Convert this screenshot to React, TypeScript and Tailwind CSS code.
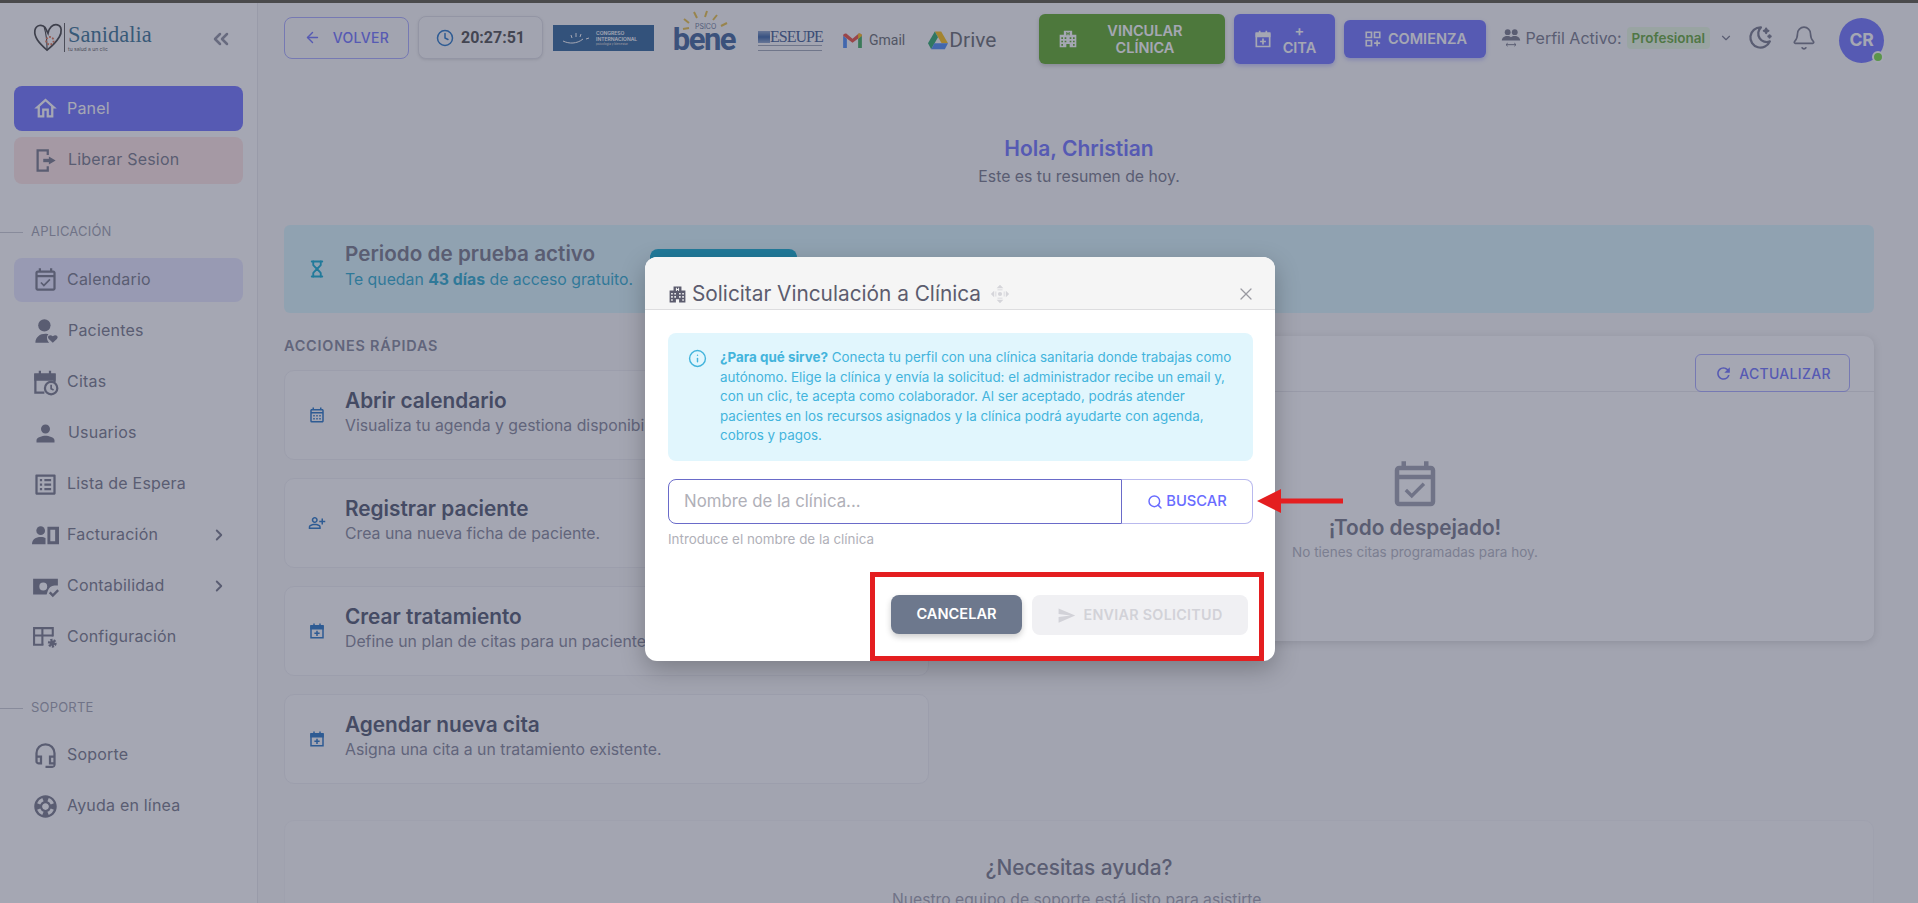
import { ArrowLeft, Bell, ChevronDown, ChevronRight, ChevronsLeft, Clock, Hourglass, Info, Search, X } from "lucide-react";
import {
  MdOutlineCalendarMonth,
  MdOutlineEventAvailable,
  MdOutlineHeadsetMic,
  MdOutlineHome,
  MdOutlineListAlt,
  MdOutlinePersonAddAlt,
  MdOutlineSupport,
  MdPerson,
  MdRefresh,
  MdSend,
} from "react-icons/md";
import { TbMoonStars } from "react-icons/tb";

type IconProps = { className?: string };

function HospitalIcon({ className }: IconProps) {
  return (
    <svg viewBox="0 0 24 24" className={className} fill="currentColor">
      <path
        fillRule="evenodd"
        d="M7 2h10v5h5v15h-8v-4h-4v4H2V7h5zm3 1.500v4h1.200V6.200h1.600v1.300H14v-4h-1.200v1.500h-1.600V3.500zM4 10v2h2v-2zm4 0v2h2v-2zm6 0v2h2v-2zm4 0v2h2v-2zM4 14v2h2v-2zm4 0v2h2v-2zm6 0v2h2v-2zm4 0v2h2v-2zM4 18v2h2v-2zm14 0v2h2v-2z"
      />
    </svg>
  );
}

function LogoutIcon({ className }: IconProps) {
  return (
    <svg viewBox="0 0 24 24" className={className} fill="none" stroke="currentColor" strokeWidth="2">
      <path d="M14 7V3H5v18h9v-4" />
      <path d="M9 12h6V8.500l6 3.500-6 3.500V12" fill="currentColor" stroke="none" />
      <path d="M10 10.500h6v3h-6z" fill="currentColor" stroke="none" />
    </svg>
  );
}

function PatientIcon({ className }: IconProps) {
  return (
    <svg viewBox="0 0 24 24" className={className} fill="currentColor">
      <circle cx="11" cy="6.500" r="5.500" />
      <path d="M3 22c0-5 4-8 9-8 1.300 0 2 .2 2.600.4-1.500 1.400-2 4.600.6 7.600z" />
      <path d="M18.500 22l-3.600-3.400c-2-2 .8-4.800 3.600-2.400 2.800-2.400 5.600.4 3.600 2.400z" />
    </svg>
  );
}

function CalendarClockIcon({ className }: IconProps) {
  return (
    <svg viewBox="0 0 24 24" className={className} fill="none" stroke="currentColor" strokeWidth="2">
      <path d="M11 21H3V5h17v7" />
      <path d="M7 1.500v4M16 1.500v4" />
      <path d="M3 5h17v4.500H3z" fill="currentColor" />
      <circle cx="17" cy="17" r="5.500" />
      <path d="M17 14v3.500l2.200 1.200" strokeWidth="1.500" />
    </svg>
  );
}

function BillingIcon({ className }: IconProps) {
  return (
    <svg viewBox="0 0 28 24" className={className} fill="currentColor">
      <circle cx="9" cy="7" r="4.500" />
      <path d="M0 21c0-5 4-7.500 9-7.500 2.500 0 4 .5 5 1.200V21z" />
      <path fillRule="evenodd" d="M16 3h12v18H16zm3 3v12h5V6z" />
    </svg>
  );
}

function AccountingIcon({ className }: IconProps) {
  return (
    <svg viewBox="0 0 24 24" className={className} fill="currentColor">
      <path fillRule="evenodd" d="M1 5h22v6h-3c-3 0-5 2-6 5l-1 3H1zm9 3.500a3.500 3.500 0 1 0 0 7 3.500 3.500 0 0 0 0-7z" />
      <path d="M15 18l1.500-1.500 2 2 4-4 1.500 1.500-5.500 5.500z" />
    </svg>
  );
}

function SettingsIcon({ className }: IconProps) {
  return (
    <svg viewBox="0 0 26 24" className={className} fill="none" stroke="currentColor" strokeWidth="2">
      <path d="M11 19H2V3h18v8" />
      <path d="M2 10h18M10 3v16" />
      <circle cx="19.500" cy="17.500" r="3" strokeWidth="2.500" strokeDasharray="2 1" />
      <circle cx="19.500" cy="17.500" r="2.500" fill="currentColor" stroke="none" />
    </svg>
  );
}

function CalendarPlusIcon({ className }: IconProps) {
  return (
    <svg viewBox="0 0 24 24" className={className} fill="none" stroke="currentColor" strokeWidth="2">
      <path d="M4 5h16v16H4z" />
      <path d="M8 2v4M16 2v4" />
      <path d="M4 6h16v3H4z" fill="currentColor" />
      <path d="M12 11.500v7M8.500 15h7" />
    </svg>
  );
}

function GridPlusIcon({ className }: IconProps) {
  return (
    <svg viewBox="0 0 24 24" className={className} fill="none" stroke="currentColor" strokeWidth="2.200">
      <path d="M3 3h7v7H3zM14 3h7v7h-7zM3 14h7v7H3z" />
      <path d="M17.500 13.500v8M13.500 17.500h8" />
    </svg>
  );
}

function SwitchAccountIcon({ className }: IconProps) {
  return (
    <svg viewBox="0 0 24 24" className={className} fill="currentColor">
      <circle cx="8" cy="5" r="3.500" />
      <circle cx="16.500" cy="5" r="3.500" />
      <path d="M1 15c0-3.500 3-5.500 6.500-5.500 2 0 3.500.5 4.500 1.500 1-1 2.500-1.500 4.500-1.500 3.500 0 6.500 2 6.500 5.500z" />
      <path d="M6 20h12M6 20l2-1.800M6 20l2 1.800M18 20l-2-1.800M18 20l-2 1.800" fill="none" stroke="currentColor" strokeWidth="1.200" />
    </svg>
  );
}

function MoveIcon({ className }: IconProps) {
  return (
    <svg viewBox="0 0 24 24" className={className} fill="currentColor">
      <path d="M12 1l4 4H8zM12 23l-4-4h8zM1 12l4-4v8zM23 12l-4 4V8z" />
      <circle cx="12" cy="12" r="2.500" />
      <path d="M9 7h6M9 17h6M7 9v6M17 9v6" stroke="currentColor" strokeWidth="1" fill="none" />
    </svg>
  );
}

function HeartLogo() {
  return (
    <svg viewBox="0 0 32 32" className="h-[32px] w-[30px]">
      <path d="M15 30C6 22 1 16 2 9c1-6 8-7 11-3l3 6c1-6 5-10 10-9 5 1 5 8 2 13-3 5-8 10-13 14z" fill="none" stroke="#3a3a3a" strokeWidth="1.800" />
      <path d="M12 6c2 6 3 14 3 24" fill="none" stroke="#3a3a3a" strokeWidth="1.200" />
      <circle cx="18" cy="20" r="4" fill="none" stroke="#e0704a" strokeWidth="2" strokeDasharray="2 1.500" />
    </svg>
  );
}

function SanidaliaLogo() {
  return (
    <div className="flex items-center">
      <HeartLogo />
      <div className="ml-[1px] border-l border-[#555555] pl-[3px]">
        <div className="[font-family:'Liberation_Serif',serif] text-[22.500px] leading-[23px] text-[#2f6b8f]">Sanidalia</div>
        <div className="text-[5px] leading-[6px] text-[#555555]">tu salud a un clic</div>
      </div>
    </div>
  );
}

function PartnerLogos() {
  return (
    <div className="ml-[10px] flex items-center">
      <div className="flex h-[26px] w-[101px] items-center gap-[5px] bg-[#255c94] pl-[8px] text-white">
        <svg viewBox="0 0 30 14" className="h-[14px] w-[30px]" fill="none" stroke="#ffffff" strokeWidth="1">
          <path d="M2 10c6 3 14 3 20-2M10 4l1 3M15 2v4M20 3l-1 3M25 8l3-1" />
        </svg>
        <div className="text-[5px] font-semibold leading-[6px]">
          <div>CONGRESO</div>
          <div>INTERNACIONAL</div>
          <div className="text-[3px] leading-[4px] text-[#cccccc]">psicología y bienestar</div>
        </div>
      </div>
      <div className="relative mb-[12px] ml-[21px] flex h-[39px] w-[60px] flex-col items-end justify-end pb-[2px]">
        <svg viewBox="0 0 60 22" className="absolute left-0 top-[-3px] h-[22px] w-[60px]" fill="none" stroke="#e7bd3c" strokeWidth="2">
          <path d="M14 14l-5-4M22 9l-3-6M30 8l2-6M38 11l4-5M46 17l6-3M8 20l6-1" />
        </svg>
        <div className="absolute left-[20px] top-[11px] text-[7px] leading-[8px] text-[#5a6d90]">PSICO</div>
        <div className="[font-family:Roboto,sans-serif] text-[31px] font-bold leading-[18px] tracking-[-1.500px] text-[#345a94]">bene</div>
      </div>
      <div className="ml-[23px] mt-[5px] flex h-[22px] w-[66px] flex-col items-start">
        <div className="flex items-center">
          <div className="h-[12px] w-[12px] bg-[linear-gradient(#8aa2c8,#2c5aa0,#8aa2c8)]" />
          <div className="[font-family:'Liberation_Serif',serif] text-[16px] leading-[15px] tracking-[-1px] text-[#33518a]">ESEUPE</div>
        </div>
        <div className="mt-[1px] h-[6px] w-[64px] border-y border-[#9aa2b0]" />
      </div>
      <div className="ml-[19px] mt-[5px] flex items-center gap-[7px]">
        <svg viewBox="0 0 20 16" className="h-[15px] w-[19px]">
          <path d="M0 16V3l4 3v10z" fill="#4285f4" />
          <path d="M16 16V6l4-3v13z" fill="#34a853" />
          <path d="M0 3c0-2 2.500-3 4-2l6 5 6-5c1.500-1 4 0 4 2l-10 7.500z" fill="#ea4335" />
          <path d="M16 1c1.500-1 4 0 4 2l-4 3z" fill="#fbbc04" />
        </svg>
        <span className="[font-family:Roboto,sans-serif] text-[14px] text-[#5f6368]">Gmail</span>
      </div>
      <div className="ml-[23px] mt-[5px] flex items-center gap-[1px]">
        <svg viewBox="0 0 22 20" className="h-[19px] w-[20px]">
          <path d="M7.500 0h7l7.500 13h-7z" fill="#fbbc04" />
          <path d="M7.500 0L0 13l3.500 6.500L11 6.500z" fill="#1fa463" />
          <path d="M3.500 19.500h15l3.500-6.500H7z" fill="#4285f4" />
        </svg>
        <span className="[font-family:Roboto,sans-serif] text-[21px] leading-[24px] text-[#5f6368]">Drive</span>
      </div>
    </div>
  );
}

function TopBar() {
  return (
    <header className="flex h-[75px] items-center pl-[26px]">
      <button className="flex h-[42px] w-[125px] items-center justify-center gap-[12px] rounded-[8px] border border-[#a5a7ff] text-[14px] font-medium tracking-[0.3px] text-[#696cff]">
        <ArrowLeft className="h-[17px] w-[17px]" />
        VOLVER
      </button>
      <div className="ml-[9px] flex h-[43px] w-[125px] items-center justify-center gap-[7px] rounded-[8px] border border-[#dddde3] bg-[#fafafa] shadow-[0_1px_3px_rgba(0,0,0,0.12)]">
        <Clock className="h-[18px] w-[18px] text-[#1b6ec2]" />
        <span className="[font-family:Roboto,sans-serif] text-[16px] font-bold text-[#444444]">20:27:51</span>
      </div>
      <PartnerLogos />
      <button className="ml-[43px] mt-[3px] flex h-[50px] w-[186px] items-center rounded-[6px] bg-[#56a51c] pl-[19px] pr-[14px] text-[14.500px] font-semibold leading-[17px] text-white shadow-[0_2px_4px_rgba(0,0,0,0.2)]">
        <HospitalIcon className="h-[20px] w-[20px] shrink-0" />
        <span className="flex-1 text-center">
          VINCULAR
          <br />
          CLÍNICA
        </span>
      </button>
      <button className="ml-[9px] mt-[3px] flex h-[50px] w-[101px] items-center rounded-[6px] bg-[#696cff] pl-[19px] pr-[10px] text-[14.500px] font-semibold leading-[17px] text-white shadow-[0_2px_4px_rgba(105,108,255,0.4)]">
        <CalendarPlusIcon className="h-[20px] w-[20px] shrink-0" />
        <span className="flex-1 text-center">
          +
          <br />
          CITA
        </span>
      </button>
      <button className="ml-[9px] mt-[3px] flex h-[38px] w-[142px] items-center justify-center gap-[6px] rounded-[6px] bg-[#696cff] text-[14.500px] font-semibold text-white shadow-[0_2px_4px_rgba(105,108,255,0.4)]">
        <GridPlusIcon className="h-[18px] w-[18px]" />
        COMIENZA
      </button>
      <div className="ml-[15px] flex items-center text-[#6f7183]">
        <SwitchAccountIcon className="h-[20px] w-[20px]" />
        <span className="ml-[4px] text-[16px]">Perfil Activo:</span>
        <span className="ml-[5px] rounded-[4px] bg-[#e8fadf] px-[5px] py-[3px] text-[13.500px] font-semibold leading-[16px] text-[#5ba32c]">Profesional</span>
        <ChevronDown className="ml-[9px] h-[14px] w-[14px]" />
      </div>
      <TbMoonStars className="ml-[14px] h-[27px] w-[27px] text-[#6f7183]" />
      <Bell className="ml-[17px] mt-[1px] h-[26px] w-[26px] text-[#6f7183]" strokeWidth={1.500} />
      <div className="relative ml-[22px] mt-[5px] flex h-[45px] w-[45px] items-center justify-center rounded-full bg-[#696cff] text-[17.500px] font-bold text-white">
        CR
        <span className="absolute bottom-0 right-0 h-[12px] w-[12px] rounded-full border-2 border-white bg-[#71dd37]" />
      </div>
    </header>
  );
}

type NavItem = { label: string; icon: (p: IconProps) => React.ReactNode; chevron?: boolean; gap?: string };

const appItems: NavItem[] = [
  { label: "Pacientes", icon: PatientIcon, gap: "ml-[10px] pb-[2px]" },
  { label: "Citas", icon: CalendarClockIcon },
  { label: "Usuarios", icon: MdPerson, gap: "ml-[10px] pb-[2px]" },
  { label: "Lista de Espera", icon: MdOutlineListAlt },
  { label: "Facturación", icon: BillingIcon, chevron: true },
  { label: "Contabilidad", icon: AccountingIcon, chevron: true },
  { label: "Configuración", icon: SettingsIcon },
];

function NavRow({ item }: { item: NavItem }) {
  const Icon = item.icon;
  return (
    <div className="mb-[7px] flex h-[44px] items-center pl-[18px] text-[16px] tracking-[0.2px] text-[#6f7183]">
      <span className="flex w-[26px] justify-center">
        <Icon className="h-[27px] w-[27px] shrink-0" />
      </span>
      <span className={item.gap ?? "ml-[9px] pb-[2px]"}>{item.label}</span>
      {item.chevron && <ChevronRight className="ml-auto mr-[15px] h-[18px] w-[18px]" strokeWidth={2.500} />}
    </div>
  );
}

function SectionLabel({ text }: { text: string }) {
  return (
    <div className="flex h-[16px] items-center gap-[8px] text-[13px] tracking-[0.2px] text-[#9a9cab]">
      <span className="h-px w-[23px] bg-[#c8c9d2]" />
      {text}
    </div>
  );
}

function Sidebar() {
  return (
    <aside className="flex w-[258px] shrink-0 flex-col border-r border-[#e8e8ec] bg-white">
      <div className="flex h-[86px] items-start justify-between pl-[33px] pr-[24px] pt-[21px]">
        <SanidaliaLogo />
        <ChevronsLeft className="mt-[6px] h-[24px] w-[24px] text-[#8a8c9c]" strokeWidth={2.500} />
      </div>
      <div className="px-[14px]">
        <div className="flex h-[45px] items-center rounded-[8px] bg-[#696cff] pl-[18px] text-[16px] tracking-[0.2px] text-white">
          <MdOutlineHome className="h-[27px] w-[27px]" />
          <span className="ml-[8px] pb-[2px]">Panel</span>
        </div>
        <div className="mt-[6px] flex h-[47px] items-center rounded-[8px] bg-[#ffe5e2] pl-[18px] text-[16px] tracking-[0.2px] text-[#6f7183]">
          <LogoutIcon className="h-[27px] w-[27px]" />
          <span className="ml-[9px] pb-[3px]">Liberar Sesion</span>
        </div>
      </div>
      <div className="mt-[40px]">
        <SectionLabel text="APLICACIÓN" />
      </div>
      <div className="mt-[18px] px-[14px]">
        <div className="mb-[7px] flex h-[44px] items-center rounded-[8px] bg-[#e7e7ff] pl-[18px] text-[16px] tracking-[0.2px] text-[#6f7183]">
          <MdOutlineEventAvailable className="h-[27px] w-[27px]" />
          <span className="ml-[8px] pb-[2px]">Calendario</span>
        </div>
        {appItems.map((item) => (
          <NavRow key={item.label} item={item} />
        ))}
      </div>
      <div className="mt-[34px]">
        <SectionLabel text="SOPORTE" />
      </div>
      <div className="mt-[17px] px-[14px]">
        <NavRow item={{ label: "Soporte", icon: MdOutlineHeadsetMic }} />
        <NavRow item={{ label: "Ayuda en línea", icon: MdOutlineSupport }} />
      </div>
    </aside>
  );
}

const actions = [
  { title: "Abrir calendario", text: "Visualiza tu agenda y gestiona disponibilidad.", icon: MdOutlineCalendarMonth },
  { title: "Registrar paciente", text: "Crea una nueva ficha de paciente.", icon: MdOutlinePersonAddAlt },
  { title: "Crear tratamiento", text: "Define un plan de citas para un paciente.", icon: CalendarPlusIcon },
  { title: "Agendar nueva cita", text: "Asigna una cita a un tratamiento existente.", icon: CalendarPlusIcon },
];

function Dashboard() {
  return (
    <div className="pl-[26px] pr-[44px]">
      <div className="mt-[62px] text-center">
        <div className="text-[21px] font-semibold leading-[24px] text-[#696cff]">Hola, Christian</div>
        <div className="mt-[5px] text-[15.800px] leading-[22px] text-[#6f7183]">Este es tu resumen de hoy.</div>
      </div>
      <div className="mt-[37px] flex h-[88px] items-center rounded-[6px] bg-[#d7f5fc] pl-[24px]">
        <Hourglass className="h-[18px] w-[18px] text-[#03a9d0]" strokeWidth={2.500} />
        <div className="ml-[19px] pb-[6px]">
          <div className="text-[20.700px] font-semibold leading-[28px] text-[#6f7183]">Periodo de prueba activo</div>
          <div className="text-[15.800px] leading-[24px] text-[#1ea7cc]">
            Te quedan <b className="font-bold">43 días</b> de acceso gratuito.
          </div>
        </div>
        <div className="ml-[17px] mt-[24px] h-[40px] w-[147px] self-start rounded-[8px] bg-[#03a9d0]" />
      </div>
      <div className="mt-[24px] flex gap-[27px]">
        <div className="w-[645px] shrink-0">
          <div className="text-[14.400px] font-semibold leading-[18px] tracking-[0.8px] text-[#7d8094]">ACCIONES RÁPIDAS</div>
          <div className="mt-[15px] flex flex-col gap-[18px]">
            {actions.map((a) => (
              <div key={a.title} className="flex h-[90px] items-center rounded-[10px] border border-[#eeeef2] bg-[#fdfdfd] pl-[23px]">
                <a.icon className="h-[18px] w-[18px] text-[#1b6ec2]" />
                <div className="ml-[19px] pb-[4px]">
                  <div className="text-[20.800px] font-semibold leading-[26px] text-[#485068]">{a.title}</div>
                  <div className="text-[15.800px] leading-[24px] text-[#7d8094]">{a.text}</div>
                </div>
              </div>
            ))}
          </div>
        </div>
        <div className="mt-[-1px] h-[305px] flex-1 rounded-[10px] bg-white shadow-[0_2px_8px_rgba(0,0,0,0.15)]">
          <div className="flex h-[56px] justify-end border-b border-[#e8e8ec] pr-[24px] pt-[18px]">
            <button className="flex h-[38px] w-[155px] items-center justify-center gap-[6px] rounded-[6px] border border-[#a5a7ff] text-[14px] font-medium tracking-[0.3px] text-[#696cff]">
              <MdRefresh className="h-[19px] w-[19px]" />
              ACTUALIZAR
            </button>
          </div>
          <div className="flex flex-col items-center pt-[67px]">
            <MdOutlineEventAvailable className="h-[54px] w-[54px] text-[#9a9cab]" />
            <div className="mt-[1px] text-[20.800px] font-semibold leading-[28px] text-[#6f7183]">¡Todo despejado!</div>
            <div className="text-[13.500px] leading-[20px] text-[#b0b2be]">No tienes citas programadas para hoy.</div>
          </div>
        </div>
      </div>
      <div className="mt-[36px] rounded-[10px] border border-[#f4f4f6] bg-[#fbfbfc] pt-[33px] text-center">
        <div className="text-[20.800px] font-medium leading-[28px] text-[#6f7183]">¿Necesitas ayuda?</div>
        <div className="mt-[7px] text-[15.700px] leading-[22px] text-[#9a9cab]">Nuestro equipo de soporte está listo para asistirte.</div>
      </div>
    </div>
  );
}

function Modal() {
  return (
    <div className="h-[404px] w-[630px] overflow-hidden rounded-[12px] bg-white shadow-[0_8px_24px_rgba(0,0,0,0.25)]">
      <div className="flex h-[53px] items-end border-b border-[#dddddf] bg-[#f5f5f5] pl-[23px] pr-[19px]">
        <div className="flex items-center">
          <HospitalIcon className="h-[19px] w-[19px] text-[#5c5c6e]" />
          <span className="ml-[5px] text-[20.800px] leading-[30px] text-[#5c5c6e]">Solicitar Vinculación a Clínica</span>
          <MoveIcon className="ml-[9px] h-[20px] w-[20px] text-[#d5d5da]" />
        </div>
        <X className="mb-[5px] ml-auto h-[20px] w-[20px] text-[#9a9aa2]" strokeWidth={1.500} />
      </div>
      <div className="pl-[23px] pr-[22px] pt-[23px]">
        <div className="flex h-[128px] rounded-[8px] bg-[#e1f6fd] pl-[20px] pr-[16px] pt-[15px] text-[13.400px] leading-[19.600px] text-[#43b4dc]">
          <Info className="mt-[1px] h-[19px] w-[19px] shrink-0" strokeWidth={1.800} />
          <p className="ml-[13px]">
            <b className="font-bold">¿Para qué sirve?</b> Conecta tu perfil con una clínica sanitaria donde trabajas como autónomo. Elige la clínica y envía la solicitud: el administrador recibe un email y, con un clic, te acepta como colaborador. Al ser aceptado, podrás atender pacientes en los recursos asignados y la clínica podrá ayudarte con agenda, cobros y pagos.
          </p>
        </div>
        <div className="mt-[18px] flex h-[45px]">
          <div className="flex w-[454px] items-center rounded-l-[8px] border border-[#6a6bc9] pl-[15px] text-[16.800px] text-[#b0b0b8]">Nombre de la clínica...</div>
          <button className="flex flex-1 items-center justify-center gap-[3px] rounded-r-[8px] border border-l-0 border-[#b9b9ee] text-[14.700px] font-medium text-[#696cff]">
            <Search className="h-[16px] w-[16px]" strokeWidth={2.200} />
            BUSCAR
          </button>
        </div>
        <div className="mt-[6px] text-[13.400px] leading-[18px] text-[#b0b0b8]">Introduce el nombre de la clínica</div>
        <div className="mt-[47px] flex justify-end gap-[10px] pr-[5px]">
          <button className="flex h-[39px] w-[131px] items-center justify-center rounded-[8px] bg-[#6d788d] text-[14.600px] font-semibold text-white shadow-[0_3px_6px_rgba(0,0,0,0.2)]">CANCELAR</button>
          <div className="flex h-[40px] w-[216px] items-center justify-center gap-[7px] rounded-[8px] bg-[#f0f0f3] text-[14.300px] font-semibold tracking-[0.3px] text-[#d2d2d8]">
            <MdSend className="h-[19px] w-[19px]" />
            ENVIAR SOLICITUD
          </div>
        </div>
      </div>
    </div>
  );
}

export default function App() {
  return (
    <div className="relative h-[903px] w-full overflow-hidden bg-[#f9f9f9] [font-family:Inter,sans-serif]">
      <div className="flex h-full">
        <Sidebar />
        <main className="min-w-0 flex-1">
          <TopBar />
          <Dashboard />
        </main>
      </div>
      {/* backdrop + dialog */}
      <div className="absolute inset-0 flex justify-center bg-[rgba(67,72,97,0.48)] pl-[2px] pt-[257px]">
        <Modal />
      </div>
      <div className="absolute inset-x-0 top-0 h-[3px] bg-[#4a4a4c]" />
      {/* red annotations drawn on the screenshot */}
      <div className="absolute left-[870px] top-[572px] h-[89px] w-[394px] border-[5px] border-[#e41e20]" />
      <svg viewBox="0 0 86 24" className="absolute left-[1257px] top-[489px] h-[24px] w-[86px]">
        <path d="M0 12L24 0v9.500h62v5H24V24z" fill="#e41e20" />
      </svg>
    </div>
  );
}
